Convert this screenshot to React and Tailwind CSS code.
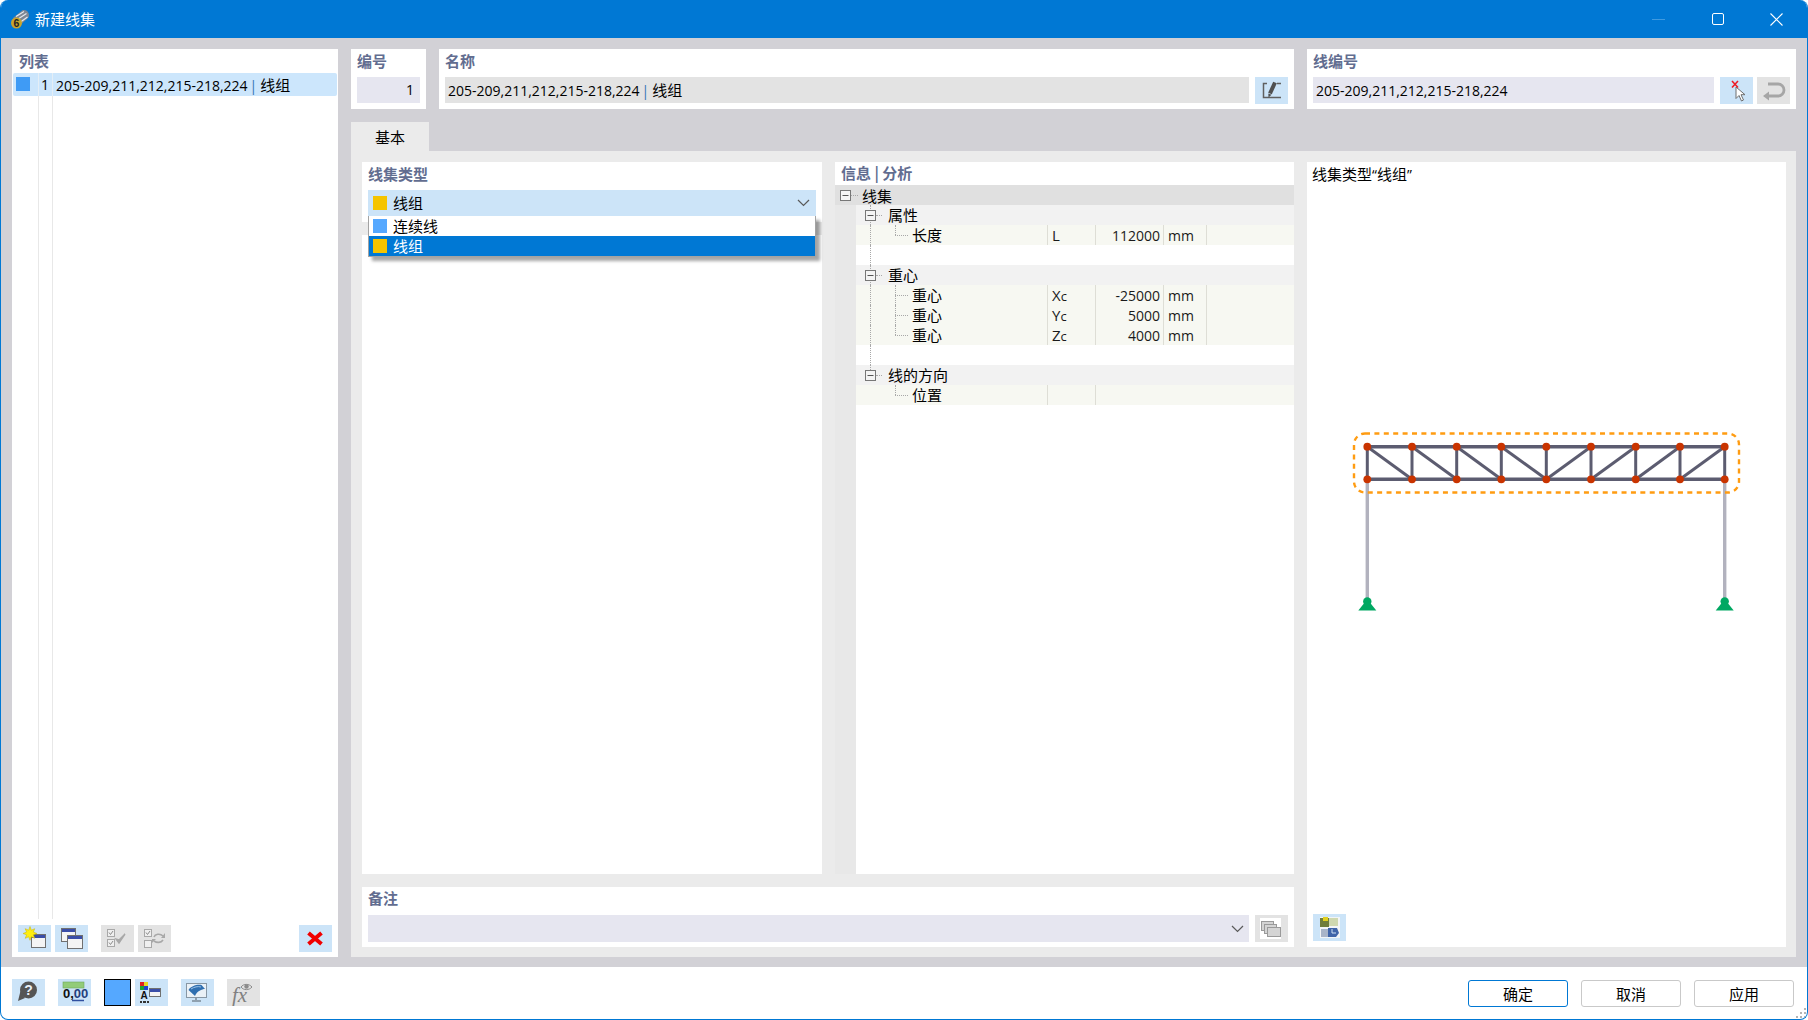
import React from "react";

const UI = "font-['Open_Sans','Noto_Sans_CJK_SC',sans-serif]";

function Cn({ children, className = "" }) {
  return <span className={"font-['Noto_Sans_CJK_SC',sans-serif] text-[15px] " + className}>{children}</span>;
}

function Bar() {
  return <span className="ml-[2px] mr-[3px] text-[#2f72b4]">|</span>;
}

function Win({ x, y, w, h }) {
  return (
    <g>
      <rect x={x + 0.5} y={y + 0.5} width={w - 1} height={h - 1} fill="#f4f4f4" stroke="#707070" />
      <rect x={x + 1} y={y + 1} width={w - 2} height={3} fill="#3a4ea8" />
    </g>
  );
}

function IconBtn({ children, off, className = "" }) {
  return (
    <div className={"w-[33px] h-[27px] shrink-0 " + (off ? "bg-[#e3e3e3] " : "bg-[#cce4f8] ") + className}>
      <svg width="33" height="27" viewBox="0 0 33 27">{children}</svg>
    </div>
  );
}

function Label({ children }) {
  return <div className="h-7 px-[6px] leading-[24px] text-[15px] font-semibold text-[#626d90] font-['Noto_Sans_CJK_SC',sans-serif]">{children}</div>;
}

function Chevron() {
  return (
    <svg width="13" height="8" viewBox="0 0 13 8" className="shrink-0">
      <path d="M1 1l5.5 5.5L12 1" fill="none" stroke="#5a5a5a" strokeWidth="1.2" />
    </svg>
  );
}

function Swatch({ color }) {
  return <span className={"w-[14px] h-[14px] shrink-0 " + color} />;
}

function TreeBox() {
  return (
    <svg width="11" height="11" viewBox="0 0 11 11" className="shrink-0">
      <rect x="0.5" y="0.5" width="10" height="10" fill="#f4f4f4" stroke="#777" />
      <path d="M2.5 5.5h6" stroke="#555" />
    </svg>
  );
}

const rows = [
  { t: "g", label: "属性" },
  { t: "i", label: "长度", sym: "L", val: "112000", unit: "mm", last: true },
  { t: "b" },
  { t: "g", label: "重心" },
  { t: "i", label: "重心", sym: "X", sub: "c", val: "-25000", unit: "mm" },
  { t: "i", label: "重心", sym: "Y", sub: "c", val: "5000", unit: "mm" },
  { t: "i", label: "重心", sym: "Z", sub: "c", val: "4000", unit: "mm", last: true },
  { t: "b" },
  { t: "g", label: "线的方向", end: true },
  { t: "i", label: "位置", sym: "", val: "", last: true, noTrunk: true },
];

function Row({ r }) {
  const dot = "absolute border-[#a8a8a8] border-dotted";
  if (r.t === "b") {
    return (
      <div className="h-5 relative">
        <span className={dot + " left-[14px] top-0 bottom-0 border-l"} />
      </div>
    );
  }
  if (r.t === "g") {
    return (
      <div className="h-5 bg-[#f2f2f2] relative flex items-center pl-[9px]">
        <span className={dot + " left-[14px] top-0 border-l " + (r.end ? "h-[5px]" : "bottom-0")} />
        <span className={dot + " left-[20px] top-[10px] w-[6px] border-t"} />
        <span className="relative flex"><TreeBox /></span>
        <Cn className="ml-3 leading-5 text-black">{r.label}</Cn>
      </div>
    );
  }
  return (
    <div className="h-5 bg-[#f7f8f2] relative flex text-[14px] leading-[22px] text-[#1a1a1a]">
      {!r.noTrunk && <span className={dot + " left-[14px] top-0 bottom-0 border-l"} />}
      <span className={dot + " left-[39px] top-0 border-l " + (r.last ? "h-[10px]" : "bottom-0")} />
      <span className={dot + " left-[39px] top-[10px] w-[13px] border-t"} />
      <div className="w-[191px] pl-[56px] leading-5"><Cn className="leading-5 text-black">{r.label}</Cn></div>
      <div className="w-[48px] pl-1 border-l border-[#deded6] text-[15px] leading-[20px]">{r.sym}<span className="text-[13px]">{r.sub}</span></div>
      <div className="w-[68px] pr-[3px] text-right border-l border-[#deded6]">{r.val}</div>
      {r.unit && <div className="w-[44px] pl-1 border-x border-[#deded6]">{r.unit}</div>}
    </div>
  );
}

function Truss() {
  const top = [1367.3, 1412, 1456.7, 1501.3, 1546.3, 1591, 1635.7, 1680, 1724.7];
  const yt = 446.7;
  const yb = 479.3;
  return (
    <svg width="478" height="726" viewBox="1307 188 478 726" className="block">
      <path d="M1367.3 479V600M1724.7 479V600" stroke="#b2b2be" strokeWidth="3.4" />
      <path d={`M1367.3 ${yt}H1724.7M1367.3 ${yb}H1724.7`} stroke="#5c5c70" strokeWidth="3.4" />
      {top.map((x) => (
        <path key={x} d={`M${x} ${yt}V${yb}`} stroke="#5c5c70" strokeWidth="3" />
      ))}
      {top.slice(0, 8).map((x, i) => (
        <path key={x} d={i < 4 ? `M${x} ${yt}L${top[i + 1]} ${yb}` : `M${x} ${yb}L${top[i + 1]} ${yt}`} stroke="#5c5c70" strokeWidth="3" />
      ))}
      {top.map((x) => (
        <g key={x} fill="#c93400">
          <circle cx={x} cy={yt} r="3.9" />
          <circle cx={x} cy={yb} r="3.9" />
        </g>
      ))}
      <rect x="1354" y="433.5" width="385" height="59" rx="11" fill="none" stroke="#ff9c12" strokeWidth="2.4" strokeDasharray="5 4.4" />
      {[1367.3, 1724.7].map((x) => (
        <g key={x} fill="#00a862">
          <circle cx={x} cy="601.5" r="4.2" />
          <path d={`M${x - 9} 610.5L${x - 3} 603H${x + 3}L${x + 9} 610.5Z`} />
        </g>
      ))}
    </svg>
  );
}

function FootBtn({ children, primary }) {
  return (
    <div className={"w-[100px] h-[27px] rounded-[3px] border text-center leading-[25px] text-black " + (primary ? "border-[#0078d4]" : "border-[#c9c9c9]")}>
      <Cn>{children}</Cn>
    </div>
  );
}

export default function App() {
  return (
    <div className={"w-[1808px] h-[1020px] bg-white flex flex-col overflow-hidden rounded-lg border-x border-b border-[#0078d4] " + UI}>
      <div className="h-[38px] shrink-0 bg-[#0078d4] flex items-center text-white">
        <svg width="20" height="20" viewBox="0 0 20 20" className="ml-[9px] shrink-0">
          <path d="M3 9L12 1.5c2.5-1 5.500 0 6.500 2.500s.5 4.500-1.500 6L9 17z" fill="#7d8794" />
          <path d="M6 7.500l8-5M8 10l8.500-5.500M10.500 13l7-5" stroke="#e4e8ee" strokeWidth="1.2" />
          <circle cx="6.5" cy="14" r="5.5" fill="#c9a52c" />
          <text x="6.5" y="18" textAnchor="middle" fontSize="10.5" fontWeight="700" fill="#222" fontFamily="Liberation Sans, sans-serif">6</text>
        </svg>
        <Cn className="ml-[5px]">新建线集</Cn>
        <div className="ml-auto mr-px flex">
          <div className="w-[59px] h-[38px] flex items-center justify-center">
            <div className="w-[13px] h-px bg-[#3f9ae0]" />
          </div>
          <div className="w-[59px] h-[38px] flex items-center justify-center">
            <div className="w-[12px] h-[12px] border border-white rounded-[2px]" />
          </div>
          <div className="w-[59px] h-[38px] flex items-center justify-center">
            <svg width="13" height="13" viewBox="0 0 13 13">
              <path d="M.5.5l12 12M12.5.5l-12 12" stroke="#fff" strokeWidth="1.1" />
            </svg>
          </div>
        </div>
      </div>

      <div className="h-[929px] shrink-0 bg-[#d2d1d6] flex pl-[11px] pr-[11px] pt-[11px] pb-[10px] gap-[13px]">
        <div className="w-[326px] shrink-0 bg-white flex flex-col">
          <div className="h-6 px-[7px] leading-[24px] text-[15px] font-semibold text-[#626d90] font-['Noto_Sans_CJK_SC',sans-serif]">列表</div>
          <div className="mx-px h-[23px] bg-[#cce6fc] rounded-[2px] flex text-[14px] leading-[23px] text-black">
            <div className="w-[26px] border-r border-[#e4eef6] pl-[3px] pt-1 flex items-start"><Swatch color="bg-[#3f9bf5]" /></div>
            <div className="w-[14px] border-r border-[#e4eef6] text-right pr-[3px]">1</div>
            <div className="pl-[3px]">205-209,211,212,215-218,224<Bar /><Cn>线组</Cn></div>
          </div>
          <div className="mx-px flex-1 flex">
            <div className="w-[26px] border-r border-[#e8e8e8]" />
            <div className="w-[14px] border-r border-[#e8e8e8]" />
          </div>
          <div className="flex pl-[6px] pr-[6px] pt-[6px] pb-[5px] items-center">
            <IconBtn>
              <Win x={13} y={9} w={15} h={14} />
              <path d="M12 1.5l1.3 3.700 3.400-1.500-1.300 3.400 3.600 1.400-3.600 1.300 1.300 3.500-3.400-1.500-1.300 3.500-1.300-3.500-3.500 1.500 1.400-3.500-3.600-1.300 3.600-1.400-1.400-3.400 3.500 1.500z" fill="#ffee10" stroke="#c8b000" strokeWidth=".5" />
            </IconBtn>
            <IconBtn className="ml-1">
              <Win x={6} y={3} w={15} h={14} />
              <Win x={12} y={10} w={16} h={14} />
            </IconBtn>
            <IconBtn off className="ml-[13px]">
              <g fill="#efefef" stroke="#a8a8a8">
                <rect x="6.5" y="4.5" width="7" height="7" />
                <rect x="6.5" y="14.5" width="7" height="7" />
              </g>
              <path d="M8 7.500l1.500 2 2.500-3.500M8 17.500l1.500 2 2.500-3.500" fill="none" stroke="#8c8c8c" />
              <path d="M15 14l3 4 6-9-6 6z" fill="#a8a8a8" stroke="#a8a8a8" strokeWidth="1.4" />
            </IconBtn>
            <IconBtn off className="ml-1">
              <g fill="#efefef" stroke="#a8a8a8">
                <rect x="6.5" y="4.5" width="7" height="7" />
                <rect x="6.5" y="15.5" width="7" height="7" />
              </g>
              <path d="M8 7.500l1.500 2 2.500-3.500" fill="none" stroke="#8c8c8c" />
              <path d="M16 12c1-3 6-4 9-1M25 15c-2 3-6 3-9 1" fill="none" stroke="#a8a8a8" strokeWidth="1.6" />
              <path d="M27 8v5h-4zM14 18v-4h4z" fill="#a8a8a8" />
            </IconBtn>
            <IconBtn className="ml-auto">
              <path d="M9.500 8l13 11M22.500 8l-13 11" stroke="#f00000" strokeWidth="4" />
            </IconBtn>
          </div>
        </div>

        <div className="flex-1 min-w-0 flex flex-col">
          <div className="h-[60px] shrink-0 flex gap-[13px] text-[14px] text-black">
            <div className="w-[75px] bg-white">
              <Label>编号</Label>
              <div className="mx-[6px] h-[26px] bg-[#e6e6f0] text-right pr-[6px] leading-[26px]">1</div>
            </div>
            <div className="w-[855px] bg-white">
              <Label>名称</Label>
              <div className="mx-[6px] flex gap-[6px]">
                <div className="flex-1 h-[26px] bg-[#e3e3e3] pl-[3px] leading-[26px]">205-209,211,212,215-218,224<Bar /><Cn>线组</Cn></div>
                <IconBtn>
                  <path d="M12 6.500H8.500V20.500H26M22 6.500h4" fill="none" stroke="#606060" strokeWidth="1.5" />
                  <path d="M15 16.500L20 5.500" stroke="#505050" strokeWidth="4" />
                  <path d="M13.500 20.500l-.2-4 3.200 1.300z" fill="#505050" />
                </IconBtn>
              </div>
            </div>
            <div className="flex-1 bg-white">
              <Label>线编号</Label>
              <div className="mx-[6px] flex">
                <div className="flex-1 h-[26px] bg-[#e6e6f0] pl-[3px] leading-[28px]">205-209,211,212,215-218,224</div>
                <IconBtn className="ml-[6px]">
                  <path d="M16 10v11.500l3-3 2.500 5.500 2-1-2.500-5.300h4z" fill="#fff" stroke="#6e6e6e" />
                  <path d="M12 4l6 6.500M18 4l-6 6.500" stroke="#ee1c25" strokeWidth="1.6" />
                </IconBtn>
                <IconBtn off className="ml-1">
                  <path d="M11 7H21a6 6 0 0 1 0 12H11" fill="none" stroke="#a6a6a6" strokeWidth="2.8" />
                  <path d="M6 19l6-4.500v9z" fill="#a6a6a6" />
                </IconBtn>
              </div>
            </div>
          </div>

          <div className="mt-[13px] w-[78px] h-[29px] shrink-0 bg-[#ebebeb] text-center leading-[29px] text-black"><Cn>基本</Cn></div>

          <div className="flex-1 min-h-0 bg-[#ebebeb] flex pl-[11px] pr-[10px] pt-[11px] pb-[10px] gap-[13px]">
            <div className="w-[932px] shrink-0 flex flex-col gap-[13px]">
              <div className="flex-1 min-h-0 flex gap-[13px]">
                <div className="w-[460px] shrink-0 flex flex-col gap-[13px]">
                  <div className="h-[60px] shrink-0 bg-white relative">
                    <Label>线集类型</Label>
                    <div className="mx-[6px] h-[26px] bg-[#cce4f8] flex items-center pl-[5px] pr-[6px] gap-[6px] text-black">
                      <Swatch color="bg-[#f5c400]" />
                      <Cn>线组</Cn>
                      <span className="ml-auto flex"><Chevron /></span>
                    </div>
                    <div className="absolute left-[6px] top-[54px] w-[448px] border border-t-0 border-[#a3a3a3] bg-white shadow-[4px_4px_3px_rgba(0,0,0,0.35)] z-10">
                      <div className="h-5 flex items-center pl-1 gap-[6px] text-black">
                        <Swatch color="bg-[#55a8ff]" />
                        <Cn>连续线</Cn>
                      </div>
                      <div className="h-5 flex items-center pl-1 gap-[6px] bg-[#0078d4] text-white">
                        <Swatch color="bg-[#f5c400]" />
                        <Cn>线组</Cn>
                      </div>
                    </div>
                  </div>
                  <div className="flex-1 bg-white" />
                </div>

                <div className="flex-1 min-w-0 bg-white flex flex-col">
                  <div className="h-[23px] shrink-0 px-[6px] leading-[22px] text-[15px] font-semibold text-[#626d90] font-['Noto_Sans_CJK_SC',sans-serif]">信息 | 分析</div>
                  <div className="h-5 shrink-0 bg-[#e0e0e0] relative flex items-center pl-[5px]">
                    <span className="absolute left-[16px] top-[10px] w-[7px] border-t border-dotted border-[#a8a8a8]" />
                    <TreeBox />
                    <Cn className="ml-[11px] leading-[19px] text-black">线集</Cn>
                  </div>
                  <div className="flex-1 flex min-h-0">
                    <div className="w-[21px] shrink-0 bg-[#e8e8e8]" />
                    <div className="flex-1">
                      {rows.map((r, i) => (
                        <Row key={i} r={r} />
                      ))}
                    </div>
                  </div>
                </div>
              </div>

              <div className="h-[60px] shrink-0 bg-white">
                <div className="h-7 px-[6px] leading-[22px] text-[15px] font-semibold text-[#626d90] font-['Noto_Sans_CJK_SC',sans-serif]">备注</div>
                <div className="mx-[6px] flex gap-[6px]">
                  <div className="flex-1 h-[27px] bg-[#e6e6f0] flex items-center justify-end pr-[5px]"><Chevron /></div>
                  <IconBtn off>
                    <rect x="5" y="3" width="21" height="21" fill="#fff" />
                    <g fill="#d4d4d4" stroke="#9a9a9a">
                      <rect x="6.5" y="6.5" width="12" height="9" />
                      <rect x="9.5" y="9.5" width="12" height="9" />
                      <rect x="12.5" y="12.5" width="13" height="9" />
                    </g>
                  </IconBtn>
                </div>
              </div>
            </div>

            <div className="flex-1 min-w-0 bg-white flex flex-col">
              <div className="h-[26px] shrink-0 pl-[5px] text-[14px] leading-[24px] text-black"><Cn>线集类型</Cn>“<Cn>线组</Cn>”</div>
              <Truss />
              <IconBtn className="ml-[6px]">
                <rect x="7" y="3" width="20" height="21" fill="#f2f5f7" />
                <rect x="7" y="4" width="9" height="9" fill="#6f7d3a" />
                <rect x="10" y="3" width="5" height="4" fill="#e0d020" />
                <rect x="16" y="4" width="9" height="8" fill="#cfd8b0" />
                <rect x="8" y="15" width="8" height="8" fill="#a8b4c8" />
                <path d="M15 14h9l2 5-3 4h-8z" fill="#3f64a8" />
                <path d="M19 15v4h4" fill="none" stroke="#cfe0f5" />
              </IconBtn>
            </div>
          </div>
        </div>
      </div>

      <div className="flex-1 relative flex items-start pt-3 pl-[11px] pr-[13px]">
        <IconBtn>
          <circle cx="16.5" cy="11" r="8.5" fill="#555" />
          <path d="M8.500 12L6 22l7-3z" fill="#555" />
          <text x="16.5" y="16" textAnchor="middle" fontSize="14" fontWeight="700" fill="#e8f0f7" fontFamily="Liberation Sans, sans-serif">?</text>
        </IconBtn>
        <IconBtn className="ml-[13px]">
          <rect x="5" y="3" width="21" height="6" fill="#92cc78" stroke="#6fa85c" strokeWidth=".6" />
          <text x="5" y="19" fontSize="13" fontWeight="700" fill="#111" fontFamily="Liberation Sans, sans-serif">0,<tspan fill="#24407c">00</tspan></text>
          <path d="M14 21.500h12" stroke="#3050a0" strokeWidth="1.5" />
        </IconBtn>
        <div className="ml-[13px] w-[27px] h-[27px] bg-[#55a8ff] border-[1.5px] border-black shrink-0" />
        <IconBtn className="ml-1">
          <rect x="5" y="3" width="4" height="4" fill="#e02020" />
          <rect x="9" y="3" width="4" height="4" fill="#e8d820" />
          <rect x="5" y="7" width="4" height="4" fill="#20a030" />
          <rect x="9" y="7" width="4" height="4" fill="#2040d0" />
          <Win x={14} y={9} w={12} h={9} />
          <text x="9" y="20" textAnchor="middle" fontSize="10" fontWeight="700" fill="#111" fontFamily="Liberation Sans, sans-serif">A</text>
          <path d="M5 23h2M8 23h3M12 23h2" stroke="#333" strokeWidth="2" />
        </IconBtn>
        <IconBtn className="ml-[13px]">
          <rect x="5.5" y="4.5" width="20" height="14" fill="#eaf1f7" stroke="#8797a5" />
          <path d="M7.500 11c2-4 9-6 13-5l3.500 4c-3 0-8 2-10 7z" fill="#2f6fb0" />
          <path d="M10 10c3-2 7-3 10-2" fill="none" stroke="#9cc4e8" />
          <path d="M15 19v2M11 22h9" stroke="#7b8a98" strokeWidth="1.6" />
        </IconBtn>
        <IconBtn off className="ml-[13px]">
          <text x="5" y="23" fontSize="21" fontStyle="italic" fill="#808080" fontFamily="Liberation Serif, serif">fx</text>
          <path d="M14 8c2.500-3.500 8-3.500 11 0-3 3.500-8.500 3.500-11 0z" fill="#e3e3e3" stroke="#8c8c8c" />
          <circle cx="19.5" cy="7.5" r="2.2" fill="#8c8c8c" />
        </IconBtn>
        <div className="ml-auto flex gap-[13px] mt-px">
          <FootBtn primary>确定</FootBtn>
          <FootBtn>取消</FootBtn>
          <FootBtn>应用</FootBtn>
        </div>
        <svg width="11" height="11" viewBox="0 0 11 11" className="absolute right-0 bottom-0">
          <g fill="#b4b4b4">
            <rect x="8" y="0" width="2" height="2" />
            <rect x="4" y="4" width="2" height="2" />
            <rect x="8" y="4" width="2" height="2" />
            <rect x="0" y="8" width="2" height="2" />
            <rect x="4" y="8" width="2" height="2" />
            <rect x="8" y="8" width="2" height="2" />
          </g>
        </svg>
      </div>
    </div>
  );
}
